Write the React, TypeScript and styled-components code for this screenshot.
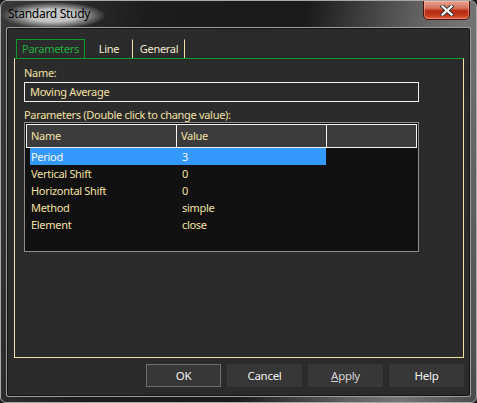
import React from "react"
import styled, { createGlobalStyle } from "styled-components"

const GlobalStyle = createGlobalStyle`
    html,
    body {
        margin: 0;
        padding: 0;
        background: #1e1e1e;
    }
    body {
        font-family: "Noto Sans", "Open Sans", sans-serif;
        font-size: 11px;
        letter-spacing: -0.3px;
    }
`

const cream = "#f3e1a5"
const green = "#0f9a2e"

const Window = styled.div`
    width: 477px;
    height: 403px;
    box-sizing: border-box;
    display: flex;
    flex-direction: column;
    border: 1px solid #a8a8a8;
    border-radius: 7px 7px 6px 6px;
    overflow: hidden;
    background: linear-gradient(100deg, #3a3a3a 0%, #1c1c1c 28%, #1a1a1a 56%, #626262 77%, #757575 86%, #4a4a4a 100%);
`

const TitleBar = styled.div`
    height: 28px;
    flex: none;
    display: flex;
    align-items: flex-start;
    justify-content: space-between;
    padding-top: 1px;
    box-sizing: border-box;
`

const TitleText = styled.span`
    padding: 4px 16px 7px 7px;
    font-size: 12px;
    line-height: 16px;
    color: #000;
    background: radial-gradient(ellipse closest-side, rgba(205, 205, 205, 0.95) 45%, rgba(205, 205, 205, 0));
`

const CloseButton = styled.div`
    width: 47px;
    height: 20px;
    margin: -2px 6px 0 0;
    box-sizing: border-box;
    display: flex;
    align-items: center;
    justify-content: center;
    border: 1px solid #4a1208;
    border-radius: 0 0 5px 5px;
    box-shadow: inset 0 0 0 1px rgba(255, 200, 180, 0.45);
    background: linear-gradient(180deg, #e7a493 0%, #d7705a 40%, #b5290f 55%, #c53a1c 80%, #e0603a 100%);
`

const Client = styled.div`
    flex: 1;
    display: flex;
    flex-direction: column;
    margin: 0 7px 7px 7px;
    padding: 10px 5px 8px 6px;
    background: #2b2b2b;
    box-shadow: 0 0 0 1px #141414, 0 0 0 2px #9c9c9c;
    border-radius: 1px;
`

const TabStrip = styled.div`
    display: flex;
    height: 19px;
    padding-left: 2px;
`

const Tab = styled.div<{ $active?: boolean; $width: number }>`
    width: ${(p) => p.$width}px;
    box-sizing: border-box;
    display: flex;
    align-items: center;
    justify-content: center;
    line-height: 14px;
    color: ${(p) => (p.$active ? "#1fae3e" : "#f3ead0")};
    border: 1px solid ${(p) => (p.$active ? green : "transparent")};
    border-bottom: none;
    border-right-color: ${(p) => (p.$active ? green : cream)};
`

const TabPanel = styled.div`
    flex: 1;
    width: 450px;
    box-sizing: border-box;
    display: flex;
    flex-direction: column;
    align-items: flex-start;
    padding: 7px 0 0 9px;
    border: 1px solid ${cream};
    border-top-color: ${green};
`

const FieldLabel = styled.div<{ $gap?: number }>`
    line-height: 14px;
    color: ${cream};
    margin-top: ${(p) => p.$gap ?? 0}px;
    margin-bottom: 2px;
`

const TextBox = styled.div`
    width: 395px;
    height: 20px;
    box-sizing: border-box;
    border: 1px solid #efefef;
    padding-left: 5px;
    line-height: 18px;
    color: ${cream};
`

const Grid = styled.div`
    width: 395px;
    height: 130px;
    box-sizing: border-box;
    border: 1px solid #8e8e8e;
    padding: 1px;
    background: #111111;
    margin-top: -2px;
`

const GridHeader = styled.div`
    display: flex;
    height: 24px;
    box-sizing: border-box;
    border: 1px solid #f4f4f4;
    background: #3c3c3c;
`

const HeaderCell = styled.div<{ $width?: number }>`
    ${(p) => (p.$width ? `width: ${p.$width}px;` : "flex: 1;")}
    box-sizing: border-box;
    padding-left: 4px;
    line-height: 22px;
    color: ${cream};
    border-right: 1px solid #f4f4f4;
    &:last-child {
        border-right: none;
    }
`

const Row = styled.div<{ $selected?: boolean }>`
    display: flex;
    width: 296px;
    height: 17px;
    margin-left: 4px;
    line-height: 17px;
    background: ${(p) => (p.$selected ? "#3399ff" : "transparent")};
    color: ${(p) => (p.$selected ? "#f4f8ff" : cream)};
`

const Cell = styled.div<{ $width: number; $pad: number }>`
    width: ${(p) => p.$width}px;
    padding-left: ${(p) => p.$pad}px;
    box-sizing: border-box;
    white-space: nowrap;
`

const ButtonRow = styled.div`
    display: flex;
    justify-content: flex-end;
    gap: 6px;
    margin-top: 6px;
`

const Button = styled.div<{ $default?: boolean; $dim?: boolean }>`
    width: 75px;
    height: 23px;
    box-sizing: border-box;
    display: flex;
    align-items: center;
    justify-content: center;
    font-size: 11.5px;
    color: ${(p) => (p.$dim ? "#d4d4d4" : "#f2f2f2")};
    background: #373737;
    border: 1px solid ${(p) => (p.$default ? "#6e6e6e" : "#373737")};
    u {
        text-decoration: underline;
    }
`

const params = [
    { name: "Period", value: "3" },
    { name: "Vertical Shift", value: "0" },
    { name: "Horizontal Shift", value: "0" },
    { name: "Method", value: "simple" },
    { name: "Element", value: "close" },
]

export default function App() {
    return (
        <>
            <GlobalStyle />
            <Window>
                <TitleBar>
                    <TitleText>Standard Study</TitleText>
                    <CloseButton>
                        <svg width="14" height="11" viewBox="0 0 14 11">
                            <path d="M2.5 1.5 L11.5 9.5 M11.5 1.5 L2.5 9.5" stroke="#3b3b3b" strokeWidth="4.2" strokeLinecap="square" />
                            <path d="M2.5 1.5 L11.5 9.5 M11.5 1.5 L2.5 9.5" stroke="#ffffff" strokeWidth="2.2" strokeLinecap="square" />
                        </svg>
                    </CloseButton>
                </TitleBar>
                <Client>
                    <TabStrip>
                        <Tab $active $width={69}>Parameters</Tab>
                        <Tab $width={48}>Line</Tab>
                        <Tab $width={52}>General</Tab>
                    </TabStrip>
                    <TabPanel>
                        <FieldLabel>Name:</FieldLabel>
                        <TextBox>Moving Average</TextBox>
                        <FieldLabel $gap={6}>Parameters (Double click to change value):</FieldLabel>
                        <Grid>
                            <GridHeader>
                                <HeaderCell $width={150}>Name</HeaderCell>
                                <HeaderCell $width={150}>Value</HeaderCell>
                                <HeaderCell />
                            </GridHeader>
                            {params.map((p, i) => (
                                <Row key={p.name} $selected={i === 0}>
                                    <Cell $width={147} $pad={1}>
                                        {p.name}
                                    </Cell>
                                    <Cell $width={149} $pad={5}>
                                        {p.value}
                                    </Cell>
                                </Row>
                            ))}
                        </Grid>
                    </TabPanel>
                    <ButtonRow>
                        <Button $default>OK</Button>
                        <Button>Cancel</Button>
                        <Button $dim>
                            <u>A</u>pply
                        </Button>
                        <Button>Help</Button>
                    </ButtonRow>
                </Client>
            </Window>
        </>
    )
}
